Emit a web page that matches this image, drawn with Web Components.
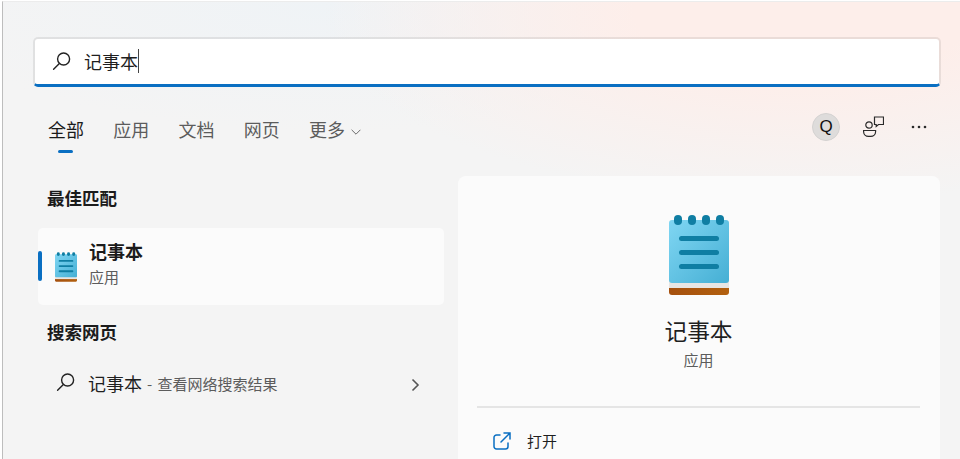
<!DOCTYPE html>
<html lang="zh-CN"><head><meta charset="utf-8"><title>搜索</title>
<style>
html,body{margin:0;padding:0;background:#fff;overflow:hidden}
body{font-family:"Noto Sans CJK SC","Liberation Sans",sans-serif;color:#1b1b1b}
</style></head><body>
<search-window>
  <search-box slot="search" value="记事本"></search-box>
  <tab-bar slot="tabs"></tab-bar>
  <result-list slot="left"></result-list>
  <detail-panel slot="right"></detail-panel>
</search-window>
<script>
let uid=0;
const notepad = (w,h)=>{const id='np'+(++uid);const br='br'+uid;return `<svg width="${w}" height="${h}" viewBox="0 0 60 80" aria-hidden="true">
<defs><linearGradient id="${id}" x1="0" y1="0" x2="1" y2="1"><stop offset="0" stop-color="#80d6f3"/><stop offset="1" stop-color="#45afd4"/></linearGradient>
<linearGradient id="${br}" x1="0" y1="0" x2="1" y2="0"><stop offset="0" stop-color="#a5500e"/><stop offset="1" stop-color="#b2600f"/></linearGradient></defs>
<path d="M0 68h60v9a3 3 0 0 1-3 3H3a3 3 0 0 1-3-3z" fill="url(#${br})"/>
<rect y="62" width="60" height="11" fill="#e8e6e4"/>
<path d="M3 5h54a3 3 0 0 1 3 3v57a3 3 0 0 1-3 3H3a3 3 0 0 1-3-3V8a3 3 0 0 1 3-3z" fill="url(#${id})"/>
<g fill="#0f7ea3"><rect x="5" y="0" width="8" height="10" rx="4"/><rect x="19" y="0" width="8" height="10" rx="4"/><rect x="33" y="0" width="8" height="10" rx="4"/><rect x="47" y="0" width="8" height="10" rx="4"/>
<rect x="10" y="21" width="40" height="5" rx="2.5"/><rect x="10" y="35" width="40" height="5" rx="2.5"/><rect x="10" y="49" width="40" height="5" rx="2.5"/></g></svg>`};
const glass = `<svg width="20" height="20" viewBox="0 0 20 20" fill="none" stroke="#222" stroke-width="1.4" stroke-linecap="round" aria-hidden="true"><circle cx="11.6" cy="8" r="6"/><path d="M7.4 12.4 1.6 18.2"/></svg>`;

function def(name, html){
  customElements.define(name, class extends HTMLElement{
    constructor(){super();this.attachShadow({mode:'open'}).innerHTML=html(this)}
  });
}

def('search-window',()=>`<style>
:host{display:flex;flex-direction:column;box-sizing:border-box;width:958px;height:458px;margin-left:2px;margin-top:1px;overflow:hidden;border-left:1px solid #bdbdbd;border-top:1px solid #ececec;
background:radial-gradient(ellipse 480px 190px at 800px 10px,#fdeeea 0,#fdeeea 35%,rgba(253,238,234,0) 100%),radial-gradient(ellipse 420px 130px at 330px 0,#eff3f6 0,rgba(239,243,246,0) 100%),#f4f4f4}
.top{padding:35px 16px 0 30px;display:flex;flex-direction:column}
.main{display:flex;flex:1;min-height:0;margin-top:6px;padding-left:35px;padding-right:20px;gap:14px}
.l{width:406px;flex:none}.r{flex:1;min-width:0}
</style><div class="top"><slot name="search"></slot><slot name="tabs"></slot></div>
<div class="main"><div class="l"><slot name="left"></slot></div><div class="r"><slot name="right"></slot></div></div>`);

def('search-box',el=>`<style>
:host{display:flex;align-items:center;box-sizing:border-box;height:50px;width:908px;background:#fff;border:2px solid rgba(0,0,0,.075);border-bottom:3px solid #0a6fc2;border-radius:5px;padding:0 0 2px 17px;background-clip:padding-box}
.t{margin-left:12px;font-size:18px;line-height:24px;color:#1f1f1f;border-right:1px solid #444;height:24px}
svg{display:block}
</style>${glass}<span class="t">${el.getAttribute('value')}</span>`);

def('tab-bar',()=>`<style>
:host{display:flex;align-items:center;height:83px;padding-left:15px;font-size:18px;color:#5c5c5c}
.tab{position:relative;margin-right:29.25px;line-height:24px;white-space:nowrap;display:flex;align-items:center}
.on{color:#1b1b1b}
.on::after{content:"";position:absolute;left:10px;bottom:-12px;width:15px;height:3px;border-radius:2px;background:#0a6fc2}
.chev{margin-left:6px;margin-top:6px}
.acts{margin-left:auto;display:flex;align-items:center;margin-right:17px;margin-bottom:4px}
.q{width:28px;height:28px;border-radius:50%;background:#dedcdb;border:1px solid #d4d2d1;box-sizing:border-box;display:flex;align-items:center;justify-content:center;font:17px "Liberation Sans",sans-serif;color:#111;margin-right:23px}
.fb{margin-right:27px;display:block}
.dots{display:block}
</style>
<span class="tab on">全部</span><span class="tab">应用</span><span class="tab">文档</span><span class="tab">网页</span>
<span class="tab">更多<svg class="chev" width="10" height="6" viewBox="0 0 10 6" fill="none" stroke="#6a6a6a" stroke-width="1" aria-hidden="true"><path d="M.6.8 5 5.200 9.400.8"/></svg></span>
<div class="acts"><span class="q">Q</span>
<svg class="fb" width="21" height="21" viewBox="0 0 21 21" fill="none" stroke="#2a2a2a" stroke-width="1.2" aria-hidden="true"><circle cx="6" cy="9" r="3.2"/><path d="M.6 14.500h12v1.200a4.800 4.800 0 0 1-4.800 4.700H5.400a4.800 4.800 0 0 1-4.800-4.700z"/><path d="M11.500 1h9v7.500h-5l-2.300 2V8.500h-1.700z"/></svg>
<svg class="dots" width="16" height="4" viewBox="0 0 16 4" fill="#2a2a2a" aria-hidden="true"><circle cx="2" cy="2" r="1.3"/><circle cx="8" cy="2" r="1.3"/><circle cx="14" cy="2" r="1.3"/></svg></div>`);

def('result-list',()=>`<style>
:host{display:block;padding-top:10px}
h2{margin:0;font-size:17.5px;font-weight:700;line-height:24px;color:#1b1b1b;padding-left:9px}
.best{position:relative;display:flex;align-items:center;box-sizing:border-box;height:77px;margin-top:18px;background:#fbfbfb;border-radius:5px;padding:0 0 8px 17px;margin-bottom:15px}
.best::before{content:"";position:absolute;left:0;top:23px;width:4px;height:30px;border-radius:2px;background:#0a6fc2}
.best svg{display:block;margin-right:12px;margin-bottom:-8px}
.n{font-size:18px;font-weight:700;line-height:24px;color:#1b1b1b}
.s{font-size:15px;line-height:20px;color:#5c5c5c;margin-top:4px}
.web{display:flex;align-items:center;height:40px;margin-top:19px;padding-left:18px}
.web .g{margin-right:12px;display:block;margin-top:3px}
.wn{font-size:18px;line-height:24px;color:#1f1f1f}
.wd{font-size:15px;color:#5c5c5c;margin-left:5px;white-space:pre;word-spacing:2px}
.arr{margin-left:auto;margin-right:24px;display:block;margin-top:3px}
</style>
<h2>最佳匹配</h2>
<div class="best">${notepad(22,30)}<div><div class="n">记事本</div><div class="s">应用</div></div></div>
<h2>搜索网页</h2>
<div class="web"><span class="g">${glass}</span><span class="wn">记事本</span><span class="wd">- 查看网络搜索结果</span>
<svg class="arr" width="9" height="14" viewBox="0 0 9 14" fill="none" stroke="#555" stroke-width="1.6" aria-hidden="true"><path d="M1.500 1.500 7 7l-5.500 5.500"/></svg></div>`);

def('detail-panel',()=>`<style>
:host{display:flex;flex-direction:column;box-sizing:border-box;height:100%;background:#fbfbfb;border-radius:8px 8px 0 0;padding:0 20px 0 19px;align-items:stretch}
.ic{display:flex;justify-content:center;margin-top:39px}
.ic svg{display:block}
.t{text-align:center;font-size:22.7px;line-height:30px;margin-top:21px;color:#1f1f1f}
.s{text-align:center;font-size:15px;line-height:20px;color:#5c5c5c;margin-top:4px}
hr{border:0;height:2px;background:#e5e5e5;margin:36px 0 0}
.a{display:flex;align-items:center;margin-top:14px;padding-left:16px;height:40px;font-size:15px;color:#1f1f1f}
.a svg{display:block;margin-right:16px;margin-top:1px}
</style>
<div class="ic">${notepad(60,80)}</div>
<div class="t">记事本</div><div class="s">应用</div><hr>
<div class="a"><svg width="18" height="18" viewBox="0 0 18 18" fill="none" stroke="#0a6fc2" stroke-width="1.5" stroke-linecap="round" aria-hidden="true"><path d="M7 3H3.500A2.500 2.500 0 0 0 1 5.500v9A2.500 2.500 0 0 0 3.500 17h9a2.500 2.500 0 0 0 2.500-2.500V11"/><path d="M11 1h6v6M17 1 8 10"/></svg>打开</div>`);
</script></body></html>
